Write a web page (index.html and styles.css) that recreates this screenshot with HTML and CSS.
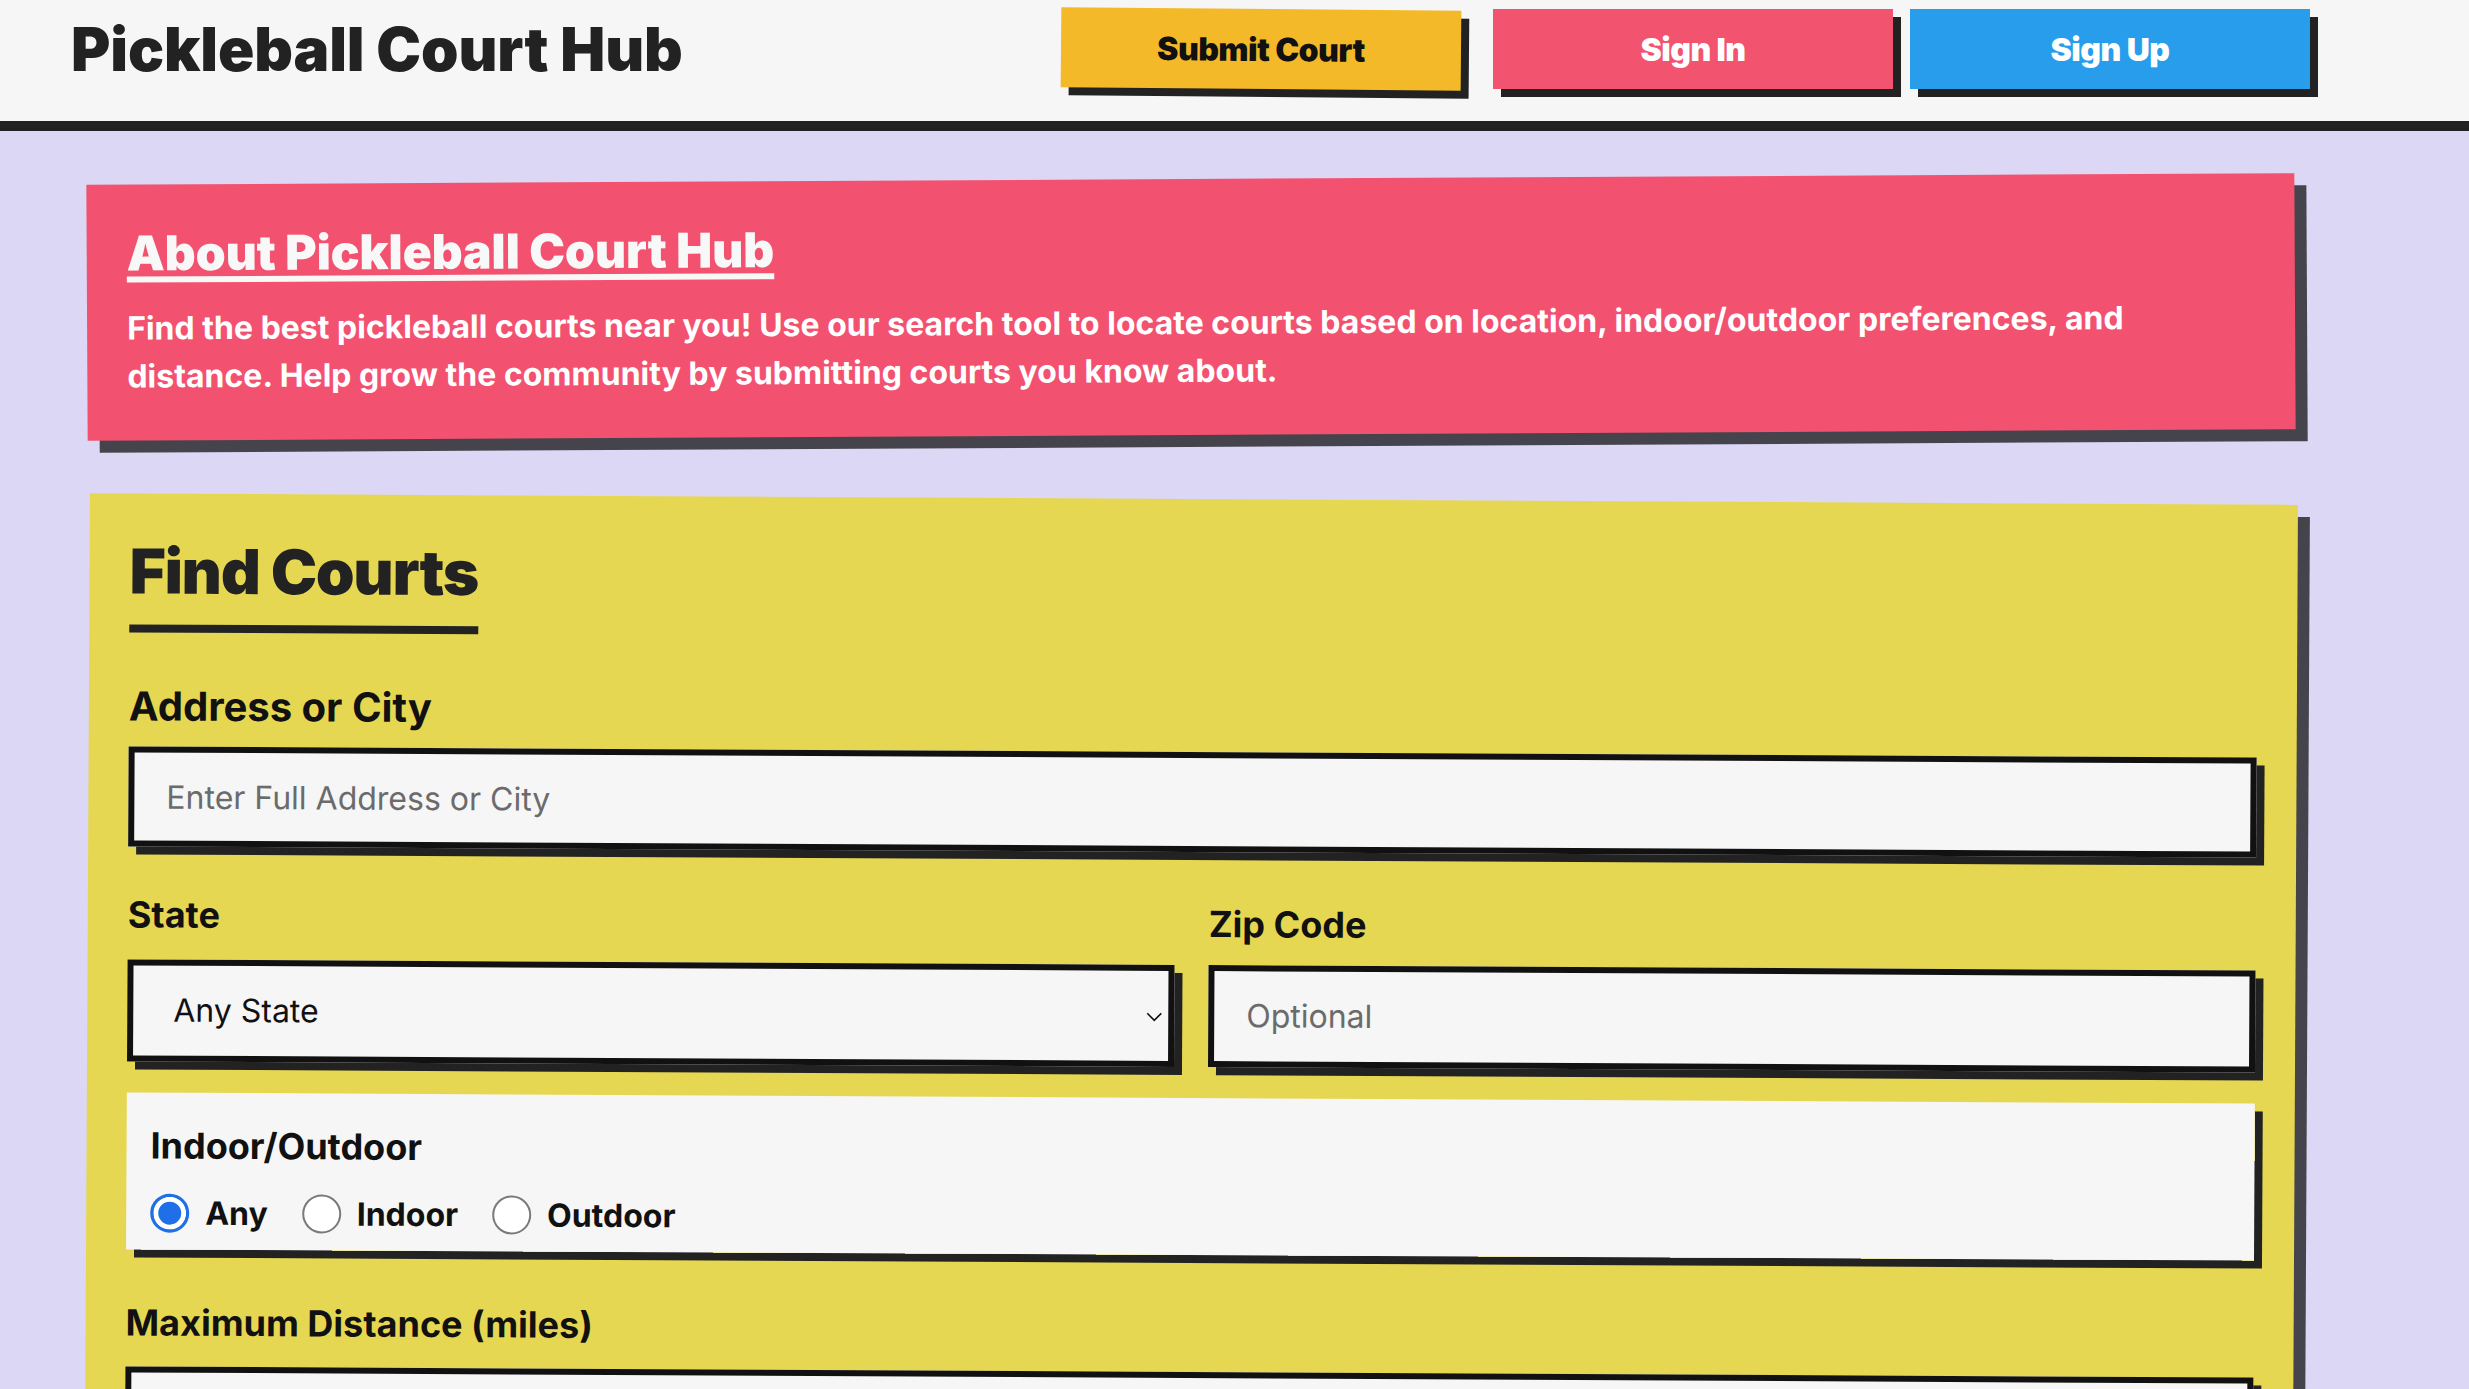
FILE: index.html
```html
<!DOCTYPE html>
<html lang="en">
<head>
<meta charset="utf-8">
<title>Pickleball Court Hub</title>
<link rel="stylesheet" href="styles.css">
</head>
<body>
<header class="site-header">
  <h1 class="brand">Pickleball Court Hub</h1>
  <nav class="nav">
    <a class="btn btn-submit" href="#">Submit Court</a>
    <a class="btn btn-signin" href="#">Sign In</a>
    <a class="btn btn-signup" href="#">Sign Up</a>
  </nav>
</header>

<main class="main">
  <section class="card card-about">
    <h2 class="about-title"><a href="#">About Pickleball Court Hub</a></h2>
    <p class="about-text">Find the best pickleball courts near you! Use our search tool to locate courts based on location, indoor/outdoor preferences, and distance. Help grow the community by submitting courts you know about.</p>
  </section>

  <section class="card card-find">
    <h2 class="find-title">Find Courts</h2>

    <div class="field field-address">
      <label class="label label-lg" for="address">Address or City</label>
      <input class="input" id="address" type="text" placeholder="Enter Full Address or City">
    </div>

    <div class="row">
      <div class="field field-tight">
        <label class="label" for="state">State</label>
        <div class="select-wrap">
          <select class="input select" id="state">
            <option>Any State</option>
            <option>Alabama</option>
            <option>California</option>
          </select>
          <svg class="chevron" viewBox="0 0 16 10" width="16" height="10" aria-hidden="true"><path d="M1 1.5 L8 8.5 L15 1.5" fill="none" stroke="#111" stroke-width="1.6"/></svg>
        </div>
      </div>
      <div class="field field-tight field-zip">
        <label class="label" for="zip">Zip Code</label>
        <input class="input" id="zip" type="text" placeholder="Optional">
      </div>
    </div>

    <fieldset class="panel">
      <div class="panel-title">Indoor/Outdoor</div>
      <div class="radios">
        <label class="radio"><input type="radio" name="io" checked><span>Any</span></label>
        <label class="radio"><input type="radio" name="io"><span>Indoor</span></label>
        <label class="radio"><input type="radio" name="io"><span>Outdoor</span></label>
      </div>
    </fieldset>

    <div class="field">
      <label class="label" for="dist">Maximum Distance (miles)</label>
      <input class="input input-dist" id="dist" type="text">
    </div>

    <button class="btn btn-search" type="button">Search Courts</button>
  </section>
</main>
</body>
</html>
```

FILE: styles.css
```css
* {
  box-sizing: border-box;
}

html, body {
  margin: 0;
  padding: 0;
}

body {
  background: #dcd7f5;
  font-family: Inter, "Noto Sans", "Liberation Sans", sans-serif;
  color: #111;
}

/* Header */
.site-header {
  display: flex;
  align-items: center;
  height: 131px;
  padding: 0 159px 23px 71px;
  background: #f6f6f6;
  border-bottom: 10px solid #222;
}

.brand {
  margin: 0;
  font-size: 60px;
  font-weight: 900;
  letter-spacing: -0.1px;
  color: #222;
  line-height: 1.21;
}

.nav {
  margin-left: auto;
  display: flex;
  gap: 17px;
}

.btn {
  display: flex;
  align-items: center;
  justify-content: center;
  width: 400px;
  height: 80px;
  font-family: Inter, "Liberation Sans", sans-serif;
  font-size: 32px;
  font-weight: 900;
  letter-spacing: -0.5px;
  text-decoration: none;
  border: none;
  box-shadow: 8px 8px 0 #222;
}

.btn-submit {
  background: #f3b928;
  color: #111;
  transform: rotate(0.5deg);
  margin-right: 15px;
}

.btn-signin {
  background: #f2536f;
  color: #fff;
}

.btn-signup {
  background: #279deb;
  color: #fff;
}

/* Main */
.main {
  padding: 48px 174px 80px 87px;
}

.card {
  padding: 40px;
  box-shadow: 12px 12px 0 #45444c;
}

.card-about {
  background: #f2526f;
  transform: rotate(-0.3deg);
  margin-bottom: 64px;
}

.about-title {
  margin: 0 0 22px;
  font-size: 48px;
  font-weight: 900;
  letter-spacing: -0.1px;
  line-height: 1.21;
}

.about-title a {
  color: #f8f8f8;
  text-decoration: underline;
  text-decoration-thickness: 6px;
  text-underline-offset: 6px;
}

.about-text {
  margin: 0;
  max-width: 2060px;
  font-size: 32px;
  line-height: 48px;
  font-weight: 700;
  color: #fff;
}

.card-find {
  background: #e6d752;
  transform: rotate(0.3deg);
}

.find-title {
  width: fit-content;
  margin: 0 0 50px;
  padding-bottom: 16px;
  border-bottom: 8px solid #222;
  font-size: 62px;
  font-weight: 900;
  letter-spacing: -1.2px;
  line-height: 1.21;
  color: #222;
}

.field {
  margin-bottom: 42px;
}

.field-address {
  margin-bottom: 47px;
}

.field-tight {
  margin-bottom: 0;
}

.label {
  display: block;
  margin-bottom: 22px;
  font-size: 36px;
  font-weight: 700;
  line-height: 1.21;
  color: #111;
}

.label-lg {
  font-size: 40px;
  margin-bottom: 16px;
}

.field-zip .label {
  margin-top: 4px;
  margin-bottom: 18px;
}

.input {
  display: block;
  width: 100%;
  height: 100px;
  padding: 0 32px;
  border: 6px solid #111;
  border-radius: 0;
  background: #f6f6f6;
  box-shadow: 8px 8px 0 #222;
  font-family: Inter, "Liberation Sans", sans-serif;
  font-size: 32px;
  font-weight: 400;
  color: #111;
  outline: none;
}

.input::placeholder {
  color: #6b6b6b;
}

.select-wrap {
  position: relative;
}

.select {
  appearance: none;
  -webkit-appearance: none;
  height: 102px;
  padding-left: 40px;
}

#zip {
  height: 102px;
}

.chevron {
  position: absolute;
  right: 12px;
  top: 47px;
  pointer-events: none;
}

.row {
  display: grid;
  grid-template-columns: 1fr 1fr;
  gap: 34px;
  margin-bottom: 31px;
}

.panel {
  margin: 0 0 52px;
  padding: 32px 24px 17px;
  border: none;
  background: #f6f6f6;
  box-shadow: 8px 8px 0 #222;
  min-width: 0;
}

.panel-title {
  margin-bottom: 25px;
  font-size: 36px;
  font-weight: 700;
  line-height: 1.21;
  color: #111;
}

.radios {
  display: flex;
  align-items: center;
  gap: 34px;
}

.radio {
  display: flex;
  align-items: center;
  gap: 16px;
  font-size: 32px;
  font-weight: 700;
  color: #111;
}

.radio input {
  appearance: none;
  -webkit-appearance: none;
  margin: 0;
  width: 39px;
  height: 39px;
  border-radius: 50%;
  border: 2px solid #7a7a7a;
  background: #fff;
}

.radio input:checked {
  border: 3px solid #1f6fe8;
  background: #1f6fe8;
  box-shadow: inset 0 0 0 5px #fff;
}

.input-dist {
  margin-top: 3px;
}

.btn-search {
  margin-top: 32px;
  background: #279deb;
  color: #fff;
}
```
